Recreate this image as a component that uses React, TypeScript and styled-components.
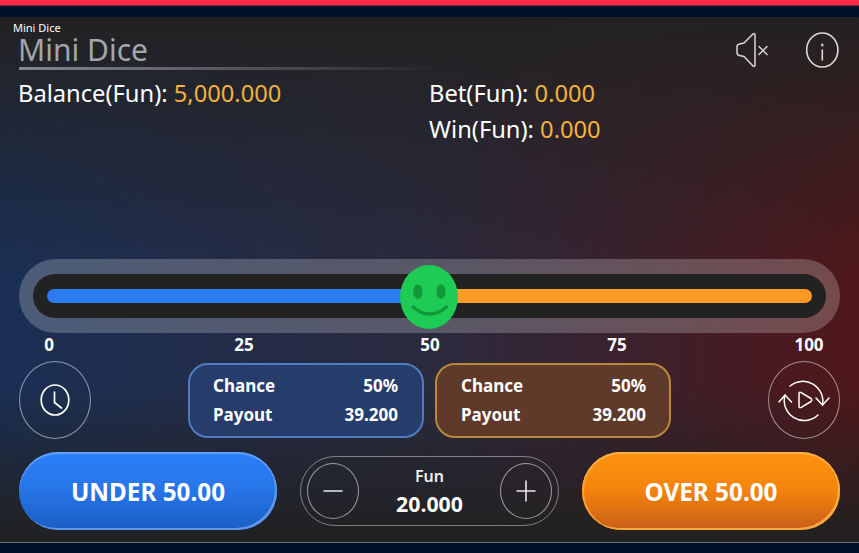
import React from 'react';
import styled, { createGlobalStyle } from 'styled-components';

const GlobalStyle = createGlobalStyle`
  html, body { margin: 0; padding: 0; background: #020f24; }
  body { font-family: "Noto Sans", "Open Sans", sans-serif; color: #fff; }
`;

const Page = styled.div`
  width: 859px;
  height: 553px;
  overflow: hidden;
  display: flex;
  flex-direction: column;
`;

const TopStripe = styled.div`
  height: 5px;
  flex: none;
  background: #fb2a48;
  border-bottom: 1px solid #8a2038;
`;

const NavyStrip = styled.div`
  height: 11px;
  flex: none;
  background: #021029;
`;

const Game = styled.div`
  flex: none;
  height: 526px;
  box-sizing: border-box;
  padding: 5px 19px 0;
  border-bottom: 1px solid #6d7078;
  background:
    linear-gradient(180deg, #232222 0%, rgba(35, 34, 34, 0.5) 24%, rgba(35, 34, 34, 0) 50%, rgba(35, 34, 34, 0) 70%, #212121 100%),
    linear-gradient(90deg, #1a2f55 0%, #2a2a3e 50%, #501719 100%);
`;

const Header = styled.header`
  display: flex;
  justify-content: space-between;
  height: 52px;
`;

const Titles = styled.div`
  display: flex;
  flex-direction: column;
  width: 412px;
`;

const SmallTitle = styled.div`
  font-size: 11px;
  line-height: 12px;
  margin-left: -6px;
`;

const BigTitle = styled.h1`
  margin: 0;
  font-size: 30px;
  font-weight: 400;
  line-height: 32px;
  text-indent: -1px;
  color: #a3a5a8;
  height: 33px;
  border-bottom: 3px solid transparent;
  border-image: linear-gradient(90deg, #85878c, rgba(123, 125, 130, 0.04)) 1;
  box-sizing: content-box;
`;

const HeaderIcons = styled.div`
  display: flex;
  align-items: flex-start;
  gap: 38px;
  padding-top: 10px;
`;

const Stats = styled.section`
  display: grid;
  grid-template-columns: 411px auto;
  grid-auto-rows: 36px;
  height: 185px;
  margin-left: -1px;
  padding-top: 1px;
  box-sizing: border-box;
  font-size: 23.7px;
  line-height: 36px;
`;

const StatLine = styled.div``;

const Amount = styled.span`
  color: #f2b23a;
`;

const Track = styled.div`
  height: 74px;
  box-sizing: border-box;
  padding: 15px 14px;
  border-radius: 37px;
  background: rgba(255, 255, 255, 0.22);
`;

const TrackInner = styled.div`
  position: relative;
  height: 44px;
  box-sizing: border-box;
  padding: 15px 14px;
  border-radius: 22px;
  background: #222222;
  display: flex;
`;

const Fill = styled.div<{ $side: 'under' | 'over' }>`
  flex: 1;
  height: 14px;
  background: ${(p) => (p.$side === 'under' ? '#2b7cf6' : '#fb9a24')};
  border-radius: ${(p) => (p.$side === 'under' ? '7px 0 0 7px' : '0 7px 7px 0')};
`;

const Knob = styled.svg`
  position: absolute;
  left: 367px;
  top: -9px;
`;

const Scale = styled.div`
  display: grid;
  grid-template-columns: 60px 330px 42px 332px 52px;
  height: 28px;
  font-size: 17px;
  font-weight: 700;
  line-height: 24px;
  text-align: center;
`;

const ScaleMark = styled.span``;

const InfoRow = styled.div`
  display: flex;
  justify-content: space-between;
  align-items: center;
  height: 78px;
`;

const RoundButton = styled.button`
  width: 72px;
  height: 78px;
  padding: 0;
  flex: none;
  display: flex;
  align-items: center;
  justify-content: center;
  background: transparent;
  border: 1px solid rgba(255, 255, 255, 0.5);
  border-radius: 50%;
`;

const Cards = styled.div`
  display: flex;
  gap: 11px;
`;

const OddsCard = styled.div<{ $side: 'under' | 'over' }>`
  width: 236px;
  height: 75px;
  box-sizing: border-box;
  padding: ${(p) => (p.$side === 'under' ? '6px 24px 0 23px' : '6px 23px 0 24px')};
  border-radius: 20px;
  border: 2px solid ${(p) => (p.$side === 'under' ? '#4f7cc0' : '#b98a3e')};
  background: ${(p) => (p.$side === 'under' ? '#263d6b' : '#5f3a2b')};
  font-size: 17px;
  font-weight: 700;
  line-height: 29px;
`;

const OddsRow = styled.div`
  display: flex;
  justify-content: space-between;
`;

const ActionRow = styled.div`
  display: flex;
  justify-content: space-between;
  align-items: center;
  margin-top: 13px;
  height: 78px;
`;

const BetButton = styled.button<{ $side: 'under' | 'over' }>`
  width: 258px;
  height: 78px;
  padding: 0;
  border: 0;
  border-radius: 39px;
  color: #fff;
  font-family: inherit;
  font-size: 24.3px;
  font-weight: 700;
  background: ${(p) =>
    p.$side === 'under'
      ? 'linear-gradient(180deg, #2b80f8 0%, #2876ea 45%, #1b5dc4 100%)'
      : 'linear-gradient(180deg, #fd930f 0%, #f6860c 45%, #c95e1a 100%)'};
  box-shadow: ${(p) =>
    p.$side === 'under'
      ? 'inset 0 2px 0 #62a0f5, inset -2px -2px 0 #5f97ea'
      : 'inset 0 2px 0 #fdb04a, inset -2px -2px 0 #f7ac3d, inset 2px 0 0 #f9a02e'};
`;

const Stepper = styled.div`
  width: 259px;
  height: 70px;
  box-sizing: border-box;
  padding: 0 6px;
  display: flex;
  align-items: center;
  justify-content: space-between;
  border: 1px solid rgba(255, 255, 255, 0.42);
  border-radius: 35px;
`;

const StepButton = styled.button`
  width: 52px;
  height: 56px;
  padding: 0;
  display: flex;
  align-items: center;
  justify-content: center;
  background: transparent;
  border: 1px solid rgba(255, 255, 255, 0.55);
  border-radius: 50%;
`;

const StakeBox = styled.div`
  display: flex;
  flex-direction: column;
  align-items: center;
`;

const StakeLabel = styled.span`
  font-size: 16px;
  font-weight: 600;
  line-height: 26px;
  color: #eeeeee;
`;

const StakeValue = styled.span`
  font-size: 21.3px;
  font-weight: 700;
  line-height: 30px;
`;

const SpeakerIcon = () => (
  <svg width="32" height="36" viewBox="0 0 32 36" fill="none" stroke="#d8d8d8" strokeWidth="1.5" strokeLinejoin="round" strokeLinecap="round">
    <path d="M1 15 Q1 12.5 3.5 12 L8 11 L17 2 Q19 0.8 19 3 L19 33 Q19 35 17 34 L8 24.5 L3.5 23.5 Q1 23 1 20.5 Z" />
    <path d="M23 14.5 L31 22.5 M31 14.5 L23 22.5" />
  </svg>
);

const InfoIcon = () => (
  <svg width="34" height="36" viewBox="0 0 34 36" fill="none" stroke="#dcdcdc" strokeWidth="1.6" strokeLinecap="round">
    <ellipse cx="16.3" cy="18" rx="15.6" ry="17" />
    <path d="M16.3 18 L16.3 28" />
    <path d="M16.3 12.6 L16.3 13.4" strokeWidth="2.2" />
  </svg>
);

const ClockIcon = () => (
  <svg width="30" height="32" viewBox="0 0 30 32" fill="none" stroke="#fff" strokeWidth="1.7" strokeLinecap="round" strokeLinejoin="round">
    <ellipse cx="15" cy="16" rx="13.8" ry="15" />
    <path d="M14.5 8 L14.5 18.5 L21.5 24" />
  </svg>
);

const ReplayIcon = () => (
  <svg width="52" height="46" viewBox="0 0 52 46" fill="none" stroke="#fff" strokeWidth="1.5" strokeLinecap="round" strokeLinejoin="round">
    <path d="M12 9 A20 20 0 0 1 44.5 28" />
    <path d="M38 21 L44.5 28 L51 21" />
    <path d="M40 38 A20 20 0 0 1 7 18" />
    <path d="M1 25 L7 18 L13.5 25" />
    <path d="M21 17 Q21 14.5 23.2 15.6 L33 21.5 Q34.6 23 33 24.5 L23.2 30.4 Q21 31.5 21 29 Z" />
  </svg>
);

const MinusIcon = () => (
  <svg width="20" height="4" viewBox="0 0 20 4" stroke="#e8e8e8" strokeWidth="1.6" strokeLinecap="round">
    <path d="M1 2 L19 2" />
  </svg>
);

const PlusIcon = () => (
  <svg width="20" height="22" viewBox="0 0 20 22" fill="none" stroke="#e8e8e8" strokeWidth="1.6" strokeLinecap="round">
    <path d="M1 11 L19 11 M10 1 L10 21" />
  </svg>
);

const Smiley = () => (
  <Knob width="58" height="64" viewBox="0 0 58 64">
    <ellipse cx="29" cy="32" rx="29" ry="32" fill="#1ecb55" />
    <ellipse cx="17.8" cy="26.7" rx="4.6" ry="7.2" fill="#12973b" />
    <ellipse cx="41" cy="26.7" rx="4.6" ry="7.2" fill="#12973b" />
    <path d="M13 42 Q29.5 56 46.5 42" fill="none" stroke="#12973b" strokeWidth="3.4" strokeLinecap="round" />
  </Knob>
);

const marks = [0, 25, 50, 75, 100];

export default function App() {
  return (
    <Page>
      <GlobalStyle />
      <TopStripe />
      <NavyStrip />
      <Game>
        <Header>
          <Titles>
            <SmallTitle>Mini Dice</SmallTitle>
            <BigTitle>Mini Dice</BigTitle>
          </Titles>
          <HeaderIcons>
            <SpeakerIcon />
            <InfoIcon />
          </HeaderIcons>
        </Header>
        <Stats>
          <StatLine>Balance(Fun): <Amount>5,000.000</Amount></StatLine>
          <StatLine>Bet(Fun): <Amount>0.000</Amount></StatLine>
          <StatLine />
          <StatLine>Win(Fun): <Amount>0.000</Amount></StatLine>
        </Stats>
        <Track>
          <TrackInner>
            <Fill $side="under" />
            <Fill $side="over" />
            <Smiley />
          </TrackInner>
        </Track>
        <Scale>
          {marks.map((m) => (
            <ScaleMark key={m}>{m}</ScaleMark>
          ))}
        </Scale>
        <InfoRow>
          <RoundButton><ClockIcon /></RoundButton>
          <Cards>
            <OddsCard $side="under">
              <OddsRow><span>Chance</span><span>50%</span></OddsRow>
              <OddsRow><span>Payout</span><span>39.200</span></OddsRow>
            </OddsCard>
            <OddsCard $side="over">
              <OddsRow><span>Chance</span><span>50%</span></OddsRow>
              <OddsRow><span>Payout</span><span>39.200</span></OddsRow>
            </OddsCard>
          </Cards>
          <RoundButton><ReplayIcon /></RoundButton>
        </InfoRow>
        <ActionRow>
          <BetButton $side="under">UNDER 50.00</BetButton>
          <Stepper>
            <StepButton><MinusIcon /></StepButton>
            <StakeBox>
              <StakeLabel>Fun</StakeLabel>
              <StakeValue>20.000</StakeValue>
            </StakeBox>
            <StepButton><PlusIcon /></StepButton>
          </Stepper>
          <BetButton $side="over">OVER 50.00</BetButton>
        </ActionRow>
      </Game>
      <NavyStrip />
    </Page>
  );
}
